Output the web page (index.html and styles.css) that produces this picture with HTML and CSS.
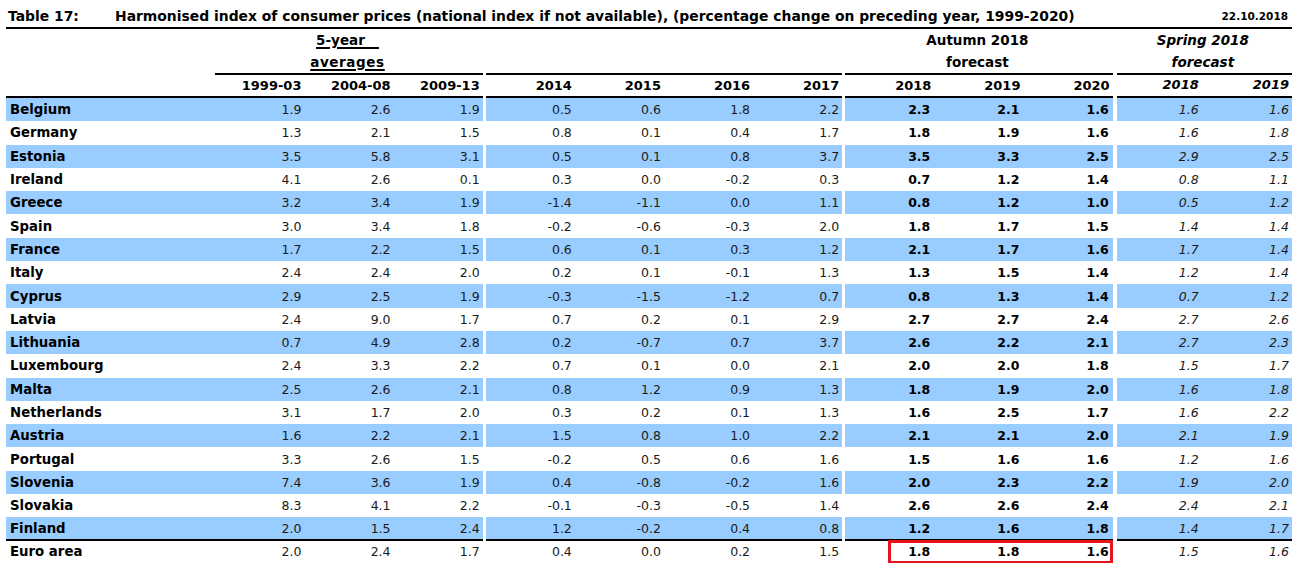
FILE: index.html
```html
<!DOCTYPE html>
<html lang="en">
<head>
<meta charset="utf-8">
<title>Table 17: HICP</title>
<link rel="stylesheet" href="styles.css">
</head>
<body>
<div class="page">
  <div class="title-bar">
    <span class="tno">Table 17:</span>
    <span class="ttl">Harmonised index of consumer prices (national index if not available), (percentage change on preceding year, 1999-2020)</span>
    <span class="date">22.10.2018</span>
  </div>
  <table class="hicp">
    <colgroup>
      <col class="c-label">
      <col class="c-n"><col class="c-n"><col class="c-n">
      <col class="c-sp">
      <col class="c-n"><col class="c-n"><col class="c-n"><col class="c-n">
      <col class="c-sp">
      <col class="c-n"><col class="c-n"><col class="c-n">
      <col class="c-sp4">
      <col class="c-s1"><col class="c-s2">
    </colgroup>
    <thead>
      <tr class="h1">
        <th></th>
        <th colspan="3" class="grp"><span class="ul">5-year&nbsp;&nbsp;&nbsp;</span></th>
        <th class="sp"></th>
        <th colspan="4"></th>
        <th class="sp"></th>
        <th colspan="3" class="grp">Autumn 2018</th>
        <th class="sp"></th>
        <th colspan="2" class="grp it">Spring 2018</th>
      </tr>
      <tr class="h2">
        <th></th>
        <th colspan="3" class="grp rule"><span class="ul wide">averages</span></th>
        <th class="sp"></th>
        <th colspan="4" class="rule"></th>
        <th class="sp"></th>
        <th colspan="3" class="grp rule">forecast</th>
        <th class="sp"></th>
        <th colspan="2" class="grp it rule">forecast</th>
      </tr>
      <tr class="h3">
        <th class="rule"></th>
        <th class="yr rule">1999-03</th><th class="yr rule">2004-08</th><th class="yr rule">2009-13</th>
        <th class="sp"></th>
        <th class="yr rule">2014</th><th class="yr rule">2015</th><th class="yr rule">2016</th><th class="yr rule">2017</th>
        <th class="sp"></th>
        <th class="yr rule">2018</th><th class="yr rule">2019</th><th class="yr rule">2020</th>
        <th class="sp"></th>
        <th class="yr it rule sp1">2018</th><th class="yr it rule">2019</th>
      </tr>
    </thead>
    <tbody>
      <tr class="blue"><th>Belgium</th><td>1.9</td><td>2.6</td><td>1.9</td><td class="sp"></td><td>0.5</td><td>0.6</td><td>1.8</td><td>2.2</td><td class="sp"></td><td class="b">2.3</td><td class="b">2.1</td><td class="b">1.6</td><td class="sp"></td><td class="it sp1">1.6</td><td class="it">1.6</td></tr>
      <tr><th>Germany</th><td>1.3</td><td>2.1</td><td>1.5</td><td class="sp"></td><td>0.8</td><td>0.1</td><td>0.4</td><td>1.7</td><td class="sp"></td><td class="b">1.8</td><td class="b">1.9</td><td class="b">1.6</td><td class="sp"></td><td class="it sp1">1.6</td><td class="it">1.8</td></tr>
      <tr class="blue"><th>Estonia</th><td>3.5</td><td>5.8</td><td>3.1</td><td class="sp"></td><td>0.5</td><td>0.1</td><td>0.8</td><td>3.7</td><td class="sp"></td><td class="b">3.5</td><td class="b">3.3</td><td class="b">2.5</td><td class="sp"></td><td class="it sp1">2.9</td><td class="it">2.5</td></tr>
      <tr><th>Ireland</th><td>4.1</td><td>2.6</td><td>0.1</td><td class="sp"></td><td>0.3</td><td>0.0</td><td>-0.2</td><td>0.3</td><td class="sp"></td><td class="b">0.7</td><td class="b">1.2</td><td class="b">1.4</td><td class="sp"></td><td class="it sp1">0.8</td><td class="it">1.1</td></tr>
      <tr class="blue"><th>Greece</th><td>3.2</td><td>3.4</td><td>1.9</td><td class="sp"></td><td>-1.4</td><td>-1.1</td><td>0.0</td><td>1.1</td><td class="sp"></td><td class="b">0.8</td><td class="b">1.2</td><td class="b">1.0</td><td class="sp"></td><td class="it sp1">0.5</td><td class="it">1.2</td></tr>
      <tr><th>Spain</th><td>3.0</td><td>3.4</td><td>1.8</td><td class="sp"></td><td>-0.2</td><td>-0.6</td><td>-0.3</td><td>2.0</td><td class="sp"></td><td class="b">1.8</td><td class="b">1.7</td><td class="b">1.5</td><td class="sp"></td><td class="it sp1">1.4</td><td class="it">1.4</td></tr>
      <tr class="blue"><th>France</th><td>1.7</td><td>2.2</td><td>1.5</td><td class="sp"></td><td>0.6</td><td>0.1</td><td>0.3</td><td>1.2</td><td class="sp"></td><td class="b">2.1</td><td class="b">1.7</td><td class="b">1.6</td><td class="sp"></td><td class="it sp1">1.7</td><td class="it">1.4</td></tr>
      <tr><th>Italy</th><td>2.4</td><td>2.4</td><td>2.0</td><td class="sp"></td><td>0.2</td><td>0.1</td><td>-0.1</td><td>1.3</td><td class="sp"></td><td class="b">1.3</td><td class="b">1.5</td><td class="b">1.4</td><td class="sp"></td><td class="it sp1">1.2</td><td class="it">1.4</td></tr>
      <tr class="blue"><th>Cyprus</th><td>2.9</td><td>2.5</td><td>1.9</td><td class="sp"></td><td>-0.3</td><td>-1.5</td><td>-1.2</td><td>0.7</td><td class="sp"></td><td class="b">0.8</td><td class="b">1.3</td><td class="b">1.4</td><td class="sp"></td><td class="it sp1">0.7</td><td class="it">1.2</td></tr>
      <tr><th>Latvia</th><td>2.4</td><td>9.0</td><td>1.7</td><td class="sp"></td><td>0.7</td><td>0.2</td><td>0.1</td><td>2.9</td><td class="sp"></td><td class="b">2.7</td><td class="b">2.7</td><td class="b">2.4</td><td class="sp"></td><td class="it sp1">2.7</td><td class="it">2.6</td></tr>
      <tr class="blue"><th>Lithuania</th><td>0.7</td><td>4.9</td><td>2.8</td><td class="sp"></td><td>0.2</td><td>-0.7</td><td>0.7</td><td>3.7</td><td class="sp"></td><td class="b">2.6</td><td class="b">2.2</td><td class="b">2.1</td><td class="sp"></td><td class="it sp1">2.7</td><td class="it">2.3</td></tr>
      <tr><th>Luxembourg</th><td>2.4</td><td>3.3</td><td>2.2</td><td class="sp"></td><td>0.7</td><td>0.1</td><td>0.0</td><td>2.1</td><td class="sp"></td><td class="b">2.0</td><td class="b">2.0</td><td class="b">1.8</td><td class="sp"></td><td class="it sp1">1.5</td><td class="it">1.7</td></tr>
      <tr class="blue"><th>Malta</th><td>2.5</td><td>2.6</td><td>2.1</td><td class="sp"></td><td>0.8</td><td>1.2</td><td>0.9</td><td>1.3</td><td class="sp"></td><td class="b">1.8</td><td class="b">1.9</td><td class="b">2.0</td><td class="sp"></td><td class="it sp1">1.6</td><td class="it">1.8</td></tr>
      <tr><th>Netherlands</th><td>3.1</td><td>1.7</td><td>2.0</td><td class="sp"></td><td>0.3</td><td>0.2</td><td>0.1</td><td>1.3</td><td class="sp"></td><td class="b">1.6</td><td class="b">2.5</td><td class="b">1.7</td><td class="sp"></td><td class="it sp1">1.6</td><td class="it">2.2</td></tr>
      <tr class="blue"><th>Austria</th><td>1.6</td><td>2.2</td><td>2.1</td><td class="sp"></td><td>1.5</td><td>0.8</td><td>1.0</td><td>2.2</td><td class="sp"></td><td class="b">2.1</td><td class="b">2.1</td><td class="b">2.0</td><td class="sp"></td><td class="it sp1">2.1</td><td class="it">1.9</td></tr>
      <tr><th>Portugal</th><td>3.3</td><td>2.6</td><td>1.5</td><td class="sp"></td><td>-0.2</td><td>0.5</td><td>0.6</td><td>1.6</td><td class="sp"></td><td class="b">1.5</td><td class="b">1.6</td><td class="b">1.6</td><td class="sp"></td><td class="it sp1">1.2</td><td class="it">1.6</td></tr>
      <tr class="blue"><th>Slovenia</th><td>7.4</td><td>3.6</td><td>1.9</td><td class="sp"></td><td>0.4</td><td>-0.8</td><td>-0.2</td><td>1.6</td><td class="sp"></td><td class="b">2.0</td><td class="b">2.3</td><td class="b">2.2</td><td class="sp"></td><td class="it sp1">1.9</td><td class="it">2.0</td></tr>
      <tr><th>Slovakia</th><td>8.3</td><td>4.1</td><td>2.2</td><td class="sp"></td><td>-0.1</td><td>-0.3</td><td>-0.5</td><td>1.4</td><td class="sp"></td><td class="b">2.6</td><td class="b">2.6</td><td class="b">2.4</td><td class="sp"></td><td class="it sp1">2.4</td><td class="it">2.1</td></tr>
      <tr class="blue last"><th>Finland</th><td>2.0</td><td>1.5</td><td>2.4</td><td class="sp"></td><td>1.2</td><td>-0.2</td><td>0.4</td><td>0.8</td><td class="sp"></td><td class="b">1.2</td><td class="b">1.6</td><td class="b">1.8</td><td class="sp"></td><td class="it sp1">1.4</td><td class="it">1.7</td></tr>
      <tr class="total"><th>Euro area</th><td>2.0</td><td>2.4</td><td>1.7</td><td class="sp"></td><td>0.4</td><td>0.0</td><td>0.2</td><td>1.5</td><td class="sp"></td><td class="b">1.8</td><td class="b">1.8</td><td class="b">1.6</td><td class="sp"></td><td class="it sp1">1.5</td><td class="it">1.6</td></tr>
    </tbody>
  </table>
  <div class="highlight"></div>
</div>
</body>
</html>
```

FILE: styles.css
```css
* { box-sizing: content-box; }

body {
  margin: 0;
  background: #ffffff;
  color: #000000;
  font-family: "DejaVu Sans", "Liberation Sans", sans-serif;
}

.page {
  position: relative;
  padding: 0 4px 0 6px;
  width: 1286px;
}

/* ---------- title ---------- */
.title-bar {
  display: flex;
  align-items: center;
  border-bottom: 2px solid #000;
  font-weight: bold;
  font-size: 13.9px;
  padding-top: 5px;
  box-sizing: border-box;
  height: 29px;
}
.tno {
  width: 107px;
  padding-left: 2px;
  flex: none;
}
.ttl {
  flex: 1;
  white-space: nowrap;
}
.date {
  font-size: 10.5px;
  padding-right: 4px;
}

/* ---------- table ---------- */
.hicp {
  table-layout: fixed;
  border-collapse: separate;
  border-spacing: 0;
  width: 1286px;
  font-size: 12.5px;
}
.c-label { width: 209px; }
.c-n { width: 89px; }
.c-sp { width: 3px; }
.c-sp4 { width: 4px; }
.c-s1 { width: 87px; }
.c-s2 { width: 88px; }

.hicp th,
.hicp td {
  padding: 0 3px 0 0;
  white-space: nowrap;
  overflow: hidden;
  vertical-align: middle;
}
.hicp td { text-align: right; font-weight: normal; color: #1a1a1a; }
.hicp td.b { font-weight: bold; color: #000; padding-right: 4px; }
.hicp .it { font-style: italic; }
.hicp td.sp1, .hicp th.sp1 { padding-right: 5px; }
.hicp .sp { padding: 0; background: #fff !important; border: 0 !important; }

/* header rows */
.hicp thead th { font-weight: bold; font-size: 13px; }
.h1 th { height: 22px; }
.h2 th { height: 22px; }
.h3 th { height: 21px; }
.grp { text-align: center; padding-right: 0; }
.hicp th.grp { font-size: 13.5px; }
.ul { text-decoration: underline; text-decoration-thickness: 1.5px; text-underline-offset: 2px; }
.ul.wide { letter-spacing: 0.6px; }
.rule { border-bottom: 2px solid #000; }
.yr { text-align: right; }
.h3 th.yr.it { vertical-align: top; padding-top: 2px; height: 19px; }

/* body */
.hicp tbody th {
  text-align: left;
  font-weight: bold;
  font-size: 13.3px;
  padding-left: 4px;
  padding-right: 0;
}
.hicp tbody tr { height: 23.3px; }
.hicp tbody tr.blue > * { background: #99ccff; }
.hicp tbody tr.last > th,
.hicp tbody tr.last > td { border-bottom: 2px solid #000; height: 21.5px; }
.hicp tbody tr.total { height: 22px; }

/* annotation box */
.highlight {
  position: absolute;
  left: 888px;
  top: 540px;
  width: 219px;
  height: 18px;
  border: 3px solid #e8141c;
}
```
